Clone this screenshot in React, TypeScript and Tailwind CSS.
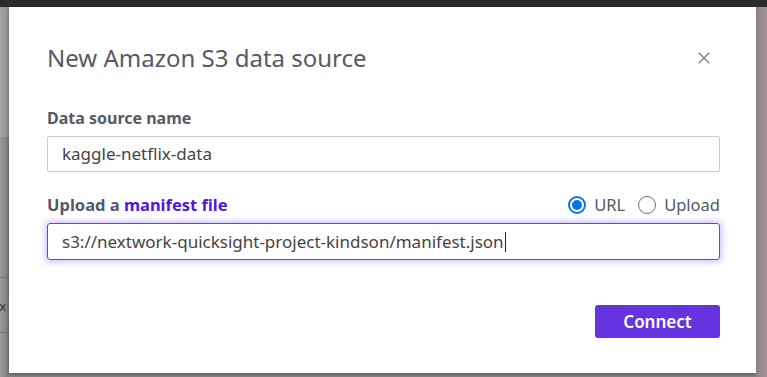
import { X } from 'lucide-react';

export default function App() {
  return (
    <div
      className="flex h-[377px] w-[767px] flex-col overflow-hidden bg-[#8f8a8d]"
      style={{ fontFamily: '"Noto Sans", "Open Sans", sans-serif' }}
    >
      {/* top bar */}
      <div className="h-[7px] shrink-0 bg-[#2b2b2b]" />
      <div className="flex flex-1">
        {/* page behind, left edge */}
        <div className="flex w-[9px] shrink-0 flex-col bg-gradient-to-r from-[#9c9c9c] to-[#7d7d7d]">
          <div className="h-[130px] bg-[#b0b0b0]/40" />
          <div className="mt-[140px] h-px bg-[#777]" />
          <div className="mt-[20px] overflow-hidden text-[13px] leading-4 text-[#333]">
            <span className="-ml-[4px] block">ix</span>
          </div>
          <div className="mt-[18px] h-px bg-[#777]" />
        </div>

        {/* modal */}
        <div className="flex h-[366px] w-[747px] shrink-0 flex-col bg-white pl-[38px] pr-[36px] pt-[35px] shadow-[0_2px_4px_rgba(0,0,0,0.35)]">
          <div className="flex items-center justify-between">
            <h1 className="text-[24px] font-normal leading-8 text-[#545b64]">
              New Amazon S3 data source
            </h1>
            <X className="mr-[6px] h-[20px] w-[20px] text-[#687078]" strokeWidth={1.3} />
          </div>

          <label className="mt-[32px] text-[16px] font-bold leading-6 text-[#545b64]">
            Data source name
          </label>
          <div className="mt-[6px] flex h-[36px] items-center rounded-[2px] border border-[#c9ced3] px-[14px] text-[17px] text-[#444]">
            kaggle-netflix-data
          </div>

          <div className="mt-[21px] flex items-center justify-between">
            <span className="text-[16.5px] font-bold leading-6 text-[#545b64]">
              Upload a <span className="text-[#5117e0]">manifest file</span>
            </span>
            <div className="flex items-center text-[16.5px] leading-6 text-[#545b64]">
              <span className="flex h-[18px] w-[18px] items-center justify-center rounded-full border-2 border-[#0a74e8]">
                <span className="h-[10px] w-[10px] rounded-full bg-[#0a74e8]" />
              </span>
              <span className="ml-[8px]">URL</span>
              <span className="ml-[13px] h-[18px] w-[18px] rounded-full border border-[#687078]" />
              <span className="ml-[8px]">Upload</span>
            </div>
          </div>
          <div className="mt-[6px] flex h-[37px] items-center rounded-[3px] border border-[#6b3fe6] px-[14px] text-[17px] text-[#444] shadow-[0_0_6px_2px_rgba(120,80,240,0.35)]">
            s3://nextwork-quicksight-project-kindson/manifest.json
            <span className="ml-px h-[20px] w-px bg-[#222]" />
          </div>

          <div className="mt-[45px] flex justify-end">
            <button
              type="button"
              className="flex h-[33px] w-[125px] items-center justify-center rounded-[3px] bg-[#6633e0] text-[17px] font-semibold text-white"
            >
              Connect
            </button>
          </div>
        </div>

        {/* page behind, right edge */}
        <div className="flex-1 bg-gradient-to-r from-[#8a8387] to-[#a5949b]" />
      </div>
    </div>
  );
}
